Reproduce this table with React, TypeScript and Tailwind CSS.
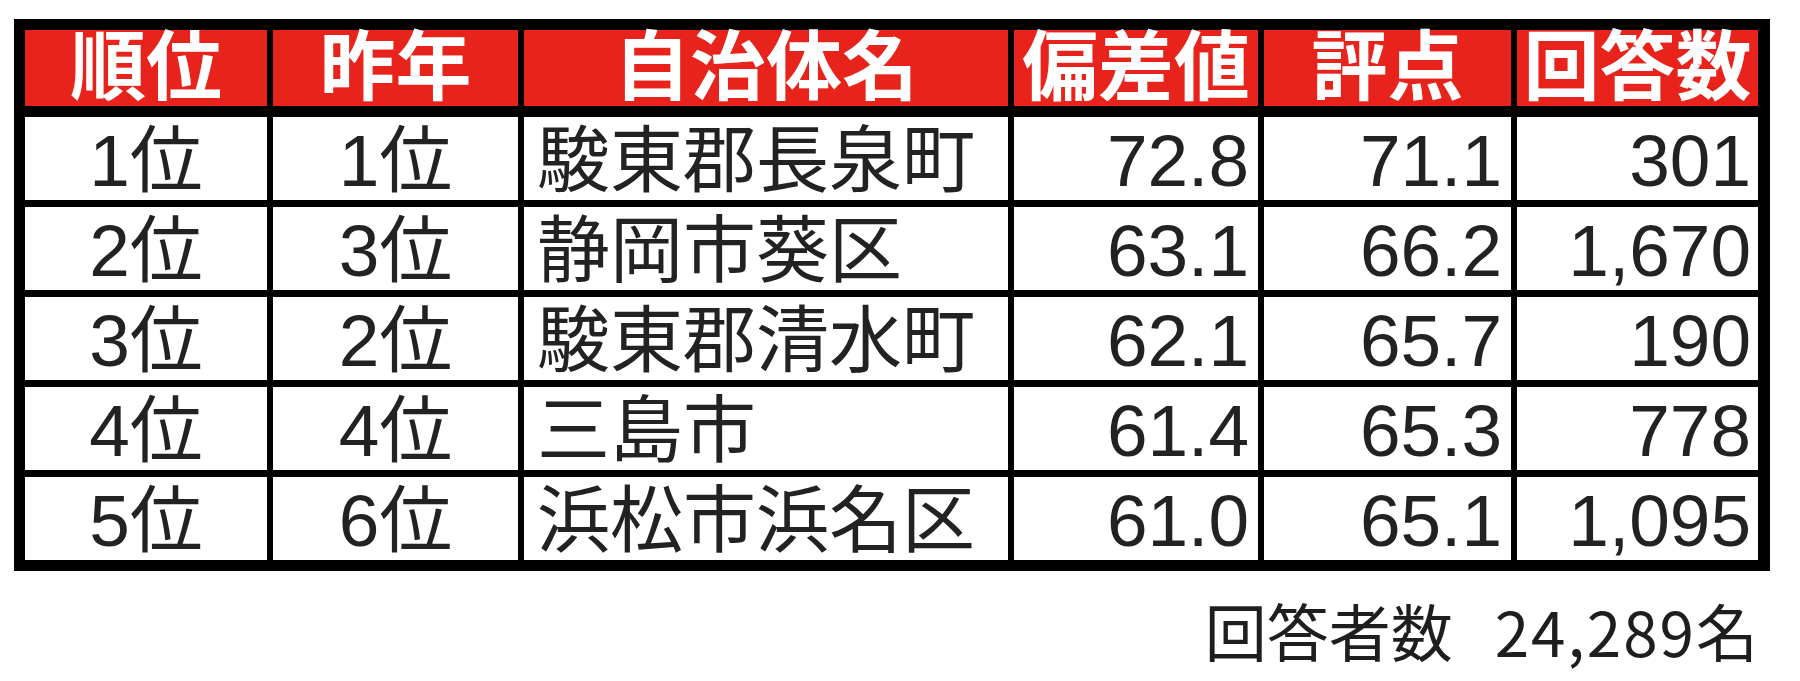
const headers = ['順位', '昨年', '自治体名', '偏差値', '評点', '回答数'];

const rows = [
  ['1位', '1位', '駿東郡長泉町', '72.8', '71.1', '301'],
  ['2位', '3位', '静岡市葵区', '63.1', '66.2', '1,670'],
  ['3位', '2位', '駿東郡清水町', '62.1', '65.7', '190'],
  ['4位', '4位', '三島市', '61.4', '65.3', '778'],
  ['5位', '6位', '浜松市浜名区', '61.0', '65.1', '1,095'],
];

const cols = 'grid grid-cols-[242px_245px_484px_244px_247px_241px] gap-x-[6px]';

// alignment per column: rank columns centred, name left, numbers right
const align = [
  'justify-center',
  'justify-center',
  'justify-start pl-[13px]',
  'justify-end pr-[9px]',
  'justify-end pr-[9px]',
  'justify-end pr-[7px]',
];

export default function App() {
  return (
    <div
      className="min-h-[681px] w-[1800px] bg-white pl-[14px] pt-[19px]"
      style={{ fontFamily: '"Liberation Sans", "Noto Sans CJK JP", sans-serif' }}
    >
      <div className="w-[1756px]">
        <div className="bg-black pb-[11px] pl-[11px] pr-[12px] pt-[11px]">
          <div className={cols}>
            {headers.map((h) => (
              <div
                key={h}
                className="flex h-[76px] items-center justify-center bg-[#e8231b] text-[76px] font-bold leading-none text-white"
              >
                {h}
              </div>
            ))}
          </div>
          <div className="mt-[11px] flex flex-col gap-y-[7px]">
            {rows.map((r) => (
              <div key={r[0]} className={cols}>
                {r.map((c, i) => (
                  <div
                    key={i}
                    className={`flex h-[83px] items-center bg-white pt-[4px] text-[73px] leading-none text-[#222] ${align[i]}`}
                  >
                    {c}
                  </div>
                ))}
              </div>
            ))}
          </div>
        </div>
        <div
          className="mt-[28px] pr-[10px] text-right text-[62px] leading-none text-[#1e1e1e]"
          style={{ fontFamily: '"Noto Sans CJK JP", sans-serif' }}
        >
          回答者数<span className="ml-[42px] tracking-[2px]">24,289名</span>
        </div>
      </div>
    </div>
  );
}
